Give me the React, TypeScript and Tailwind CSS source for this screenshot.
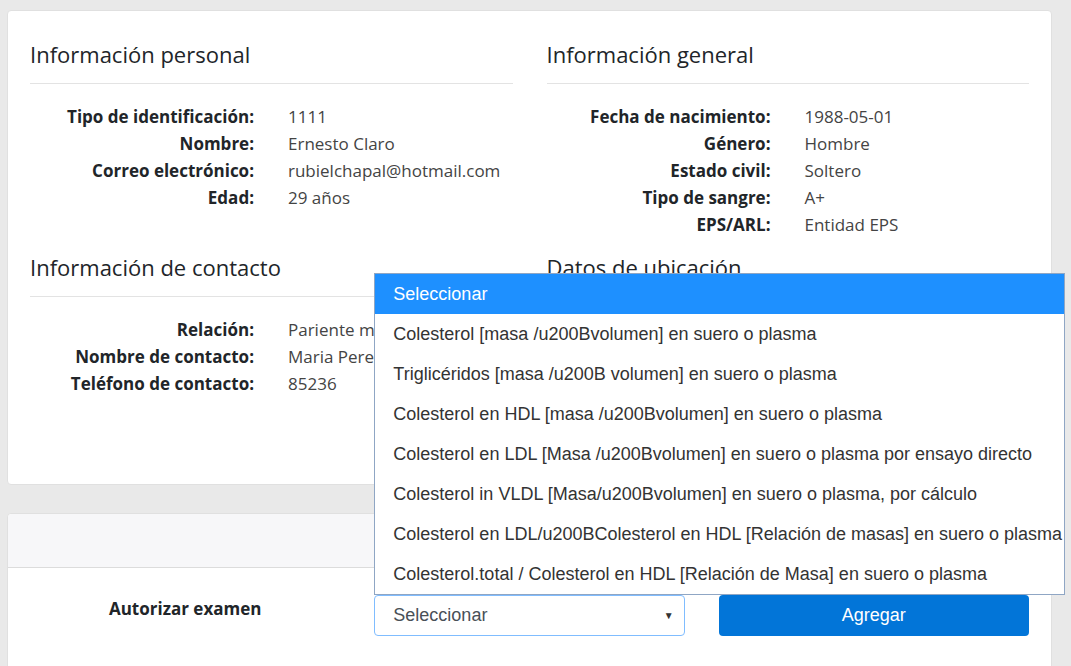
import React from 'react';

const personal = [
  ['Tipo de identificación:', '1111'],
  ['Nombre:', 'Ernesto Claro'],
  ['Correo electrónico:', 'rubielchapal@hotmail.com'],
  ['Edad:', '29 años'],
];

const general = [
  ['Fecha de nacimiento:', '1988-05-01'],
  ['Género:', 'Hombre'],
  ['Estado civil:', 'Soltero'],
  ['Tipo de sangre:', 'A+'],
  ['EPS/ARL:', 'Entidad EPS'],
];

const contacto = [
  ['Relación:', 'Pariente mayor'],
  ['Nombre de contacto:', 'Maria Perez'],
  ['Teléfono de contacto:', '85236'],
];

const ubicacion = [
  ['Departamento:', 'Antioquia'],
  ['Ciudad:', 'Medellín'],
  ['Dirección:', 'Calle 10 # 20-30'],
];

const options = [
  'Colesterol [masa /u200Bvolumen] en suero o plasma',
  'Triglicéridos [masa /u200B volumen] en suero o plasma',
  'Colesterol en HDL [masa /u200Bvolumen] en suero o plasma',
  'Colesterol en LDL [Masa /u200Bvolumen] en suero o plasma por ensayo directo',
  'Colesterol in VLDL [Masa/u200Bvolumen] en suero o plasma, por cálculo',
  'Colesterol en LDL/u200BColesterol en HDL [Relación de masas] en suero o plasma',
  'Colesterol.total / Colesterol en HDL [Relación de Masa] en suero o plasma',
];

const arial = { fontFamily: '"Liberation Sans", Arial, sans-serif' };

function Section({ title, rows }: { title: string; rows: string[][] }) {
  return (
    <div>
      <h4 className="text-[22px] leading-[30px] text-[#212529] pb-[14px] border-b border-[#e3e3e3]">{title}</h4>
      <dl className="mt-[19px] grid grid-cols-[224px_1fr] gap-x-[34px] text-[17px] leading-[27px]">
        {rows.map(([k, v]) => (
          <React.Fragment key={k}>
            <dt className="text-right font-bold text-[#212529]">{k}</dt>
            <dd className="text-[#444] whitespace-nowrap">{v}</dd>
          </React.Fragment>
        ))}
      </dl>
    </div>
  );
}

export default function App() {
  return (
    <div
      className="min-h-[666px] bg-[#e9e9e9] pt-[10px] pl-[7px] pr-[19px] overflow-hidden"
      style={{ fontFamily: '"Open Sans", "Noto Sans", sans-serif' }}
    >
      <div className="bg-white rounded border border-[#e0e0e0] px-[22px] pt-[28px] h-[475px]">
        <div className="grid grid-cols-2 gap-x-[34px]">
          <Section title="Información personal" rows={personal} />
          <Section title="Información general" rows={general} />
        </div>
        <div className="grid grid-cols-2 gap-x-[34px] mt-[14px]">
          <Section title="Información de contacto" rows={contacto} />
          <Section title="Datos de ubicación" rows={ubicacion} />
        </div>
      </div>

      <div className="mt-[28px] bg-white rounded-t border border-[#e0e0e0] h-[160px]">
        <div className="h-[54px] bg-[#f7f7f9] border-b border-[#dcdcdc] rounded-t" />
        <div className="grid grid-cols-3 gap-x-[34px] items-start px-[22px] pt-[27px]">
          <div className="text-center font-bold text-[17px] leading-[27px] text-[#212529]">Autorizar examen</div>
          <div className="relative">
            <div
              className="absolute left-0 bottom-full z-10 w-[691px] bg-white border border-[#8fa6c4] text-[18px] text-[#333]"
              style={arial}
            >
              <div className="h-[40px] flex items-center px-[18px] bg-[#1e90ff] text-white">Seleccionar</div>
              {options.map((o) => (
                <div key={o} className="h-[40px] flex items-center px-[18px] whitespace-nowrap">{o}</div>
              ))}
            </div>
            <div
              className="h-[41px] flex items-center justify-between pl-[18px] pr-[10px] border border-[#80bdff] rounded text-[18px] text-[#495057]"
              style={arial}
            >
              <span>Seleccionar</span>
              <span className="text-[10px] text-[#333]">▼</span>
            </div>
          </div>
          <button className="h-[41px] rounded bg-[#0275d8] text-white text-[18px]" style={arial}>
            Agregar
          </button>
        </div>
      </div>
    </div>
  );
}
